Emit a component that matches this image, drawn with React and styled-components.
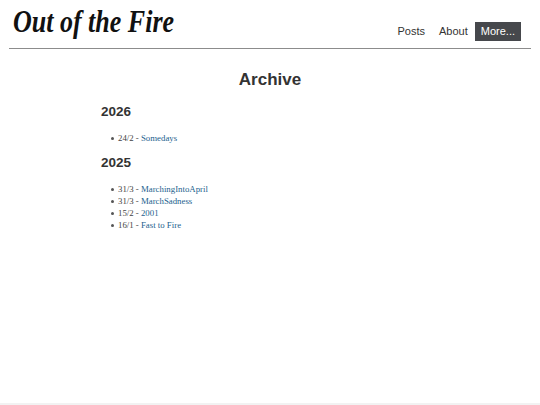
import React from "react";
import styled, { createGlobalStyle } from "styled-components";

const GlobalStyle = createGlobalStyle`
    html, body {
        margin: 0;
        padding: 0;
        background: #fff;
    }
    body {
        font-family: "Liberation Serif", "Times New Roman", serif;
        color: #333;
    }
`;

const Page = styled.div`
    display: flex;
    flex-direction: column;
    height: 100vh;
    overflow: hidden;
`;

const Header = styled.header`
    display: flex;
    align-items: flex-end;
    justify-content: space-between;
    margin: 0 9px;
    padding: 0 10px 8px 4px;
    height: 40px;
    border-bottom: 1px solid #8c8c8c;
`;

const SiteTitle = styled.a`
    font-family: "Liberation Serif", "Times New Roman", serif;
    font-style: italic;
    font-weight: 700;
    font-size: 26px;
    line-height: 30px;
    color: #111;
    text-decoration: none;
    transform: scaleY(1.18);
    transform-origin: bottom left;
`;

const Nav = styled.nav`
    display: flex;
    align-items: center;
    font-family: "Liberation Sans", Arial, sans-serif;
    font-size: 11px;
    margin-bottom: -1px;
`;

const NavLink = styled.a`
    display: block;
    padding: 3px ${(p) => (p.active ? "6px" : "7px")};
    line-height: 13px;
    color: ${(p) => (p.active ? "#fff" : "#333")};
    background: ${(p) => (p.active ? "#46484c" : "transparent")};
    text-decoration: none;
`;

const Main = styled.main`
    flex: 1;
    width: 338px;
    margin: 0 auto;
    padding-top: 20px;
`;

const Title = styled.h1`
    margin: 0 0 12px;
    text-align: center;
    font-family: "Liberation Sans", Arial, sans-serif;
    font-size: 17px;
    line-height: 22px;
    color: #333;
`;

const Year = styled.h2`
    margin: 0 0 11px;
    font-family: "Liberation Sans", Arial, sans-serif;
    font-size: 13.5px;
    line-height: 18px;
    color: #333;
`;

const List = styled.ul`
    margin: 0 0 10px;
    padding-left: 17px;
    font-size: 8.8px;
    line-height: 12px;
    color: #444;
`;

const Item = styled.li`
    list-style: none;
    position: relative;

    &::before {
        content: "";
        position: absolute;
        left: -7px;
        top: 5px;
        width: 3px;
        height: 3px;
        border-radius: 50%;
        background: #555;
    }
`;

const PostLink = styled.a`
    color: #245f8e;
    text-decoration: none;
`;

const Footer = styled.footer`
    height: 2px;
    background: #f2f2f2;
`;

const archive = [
    {
        year: "2026",
        posts: [{ date: "24/2", title: "Somedays" }],
    },
    {
        year: "2025",
        posts: [
            { date: "31/3", title: "MarchingIntoApril" },
            { date: "31/3", title: "MarchSadness" },
            { date: "15/2", title: "2001" },
            { date: "16/1", title: "Fast to Fire" },
        ],
    },
];

export default () => {
    return (
        <Page>
            <GlobalStyle />
            <Header>
                <SiteTitle href="#">Out of the Fire</SiteTitle>
                <Nav>
                    <NavLink href="#">Posts</NavLink>
                    <NavLink href="#">About</NavLink>
                    <NavLink href="#" active>More...</NavLink>
                </Nav>
            </Header>
            <Main>
                <Title>Archive</Title>
                {archive.map((group) => (
                    <section key={group.year}>
                        <Year>{group.year}</Year>
                        <List>
                            {group.posts.map((post) => (
                                <Item key={post.date + post.title}>
                                    {post.date} - <PostLink href="#">{post.title}</PostLink>
                                </Item>
                            ))}
                        </List>
                    </section>
                ))}
            </Main>
            <Footer />
        </Page>
    );
};
